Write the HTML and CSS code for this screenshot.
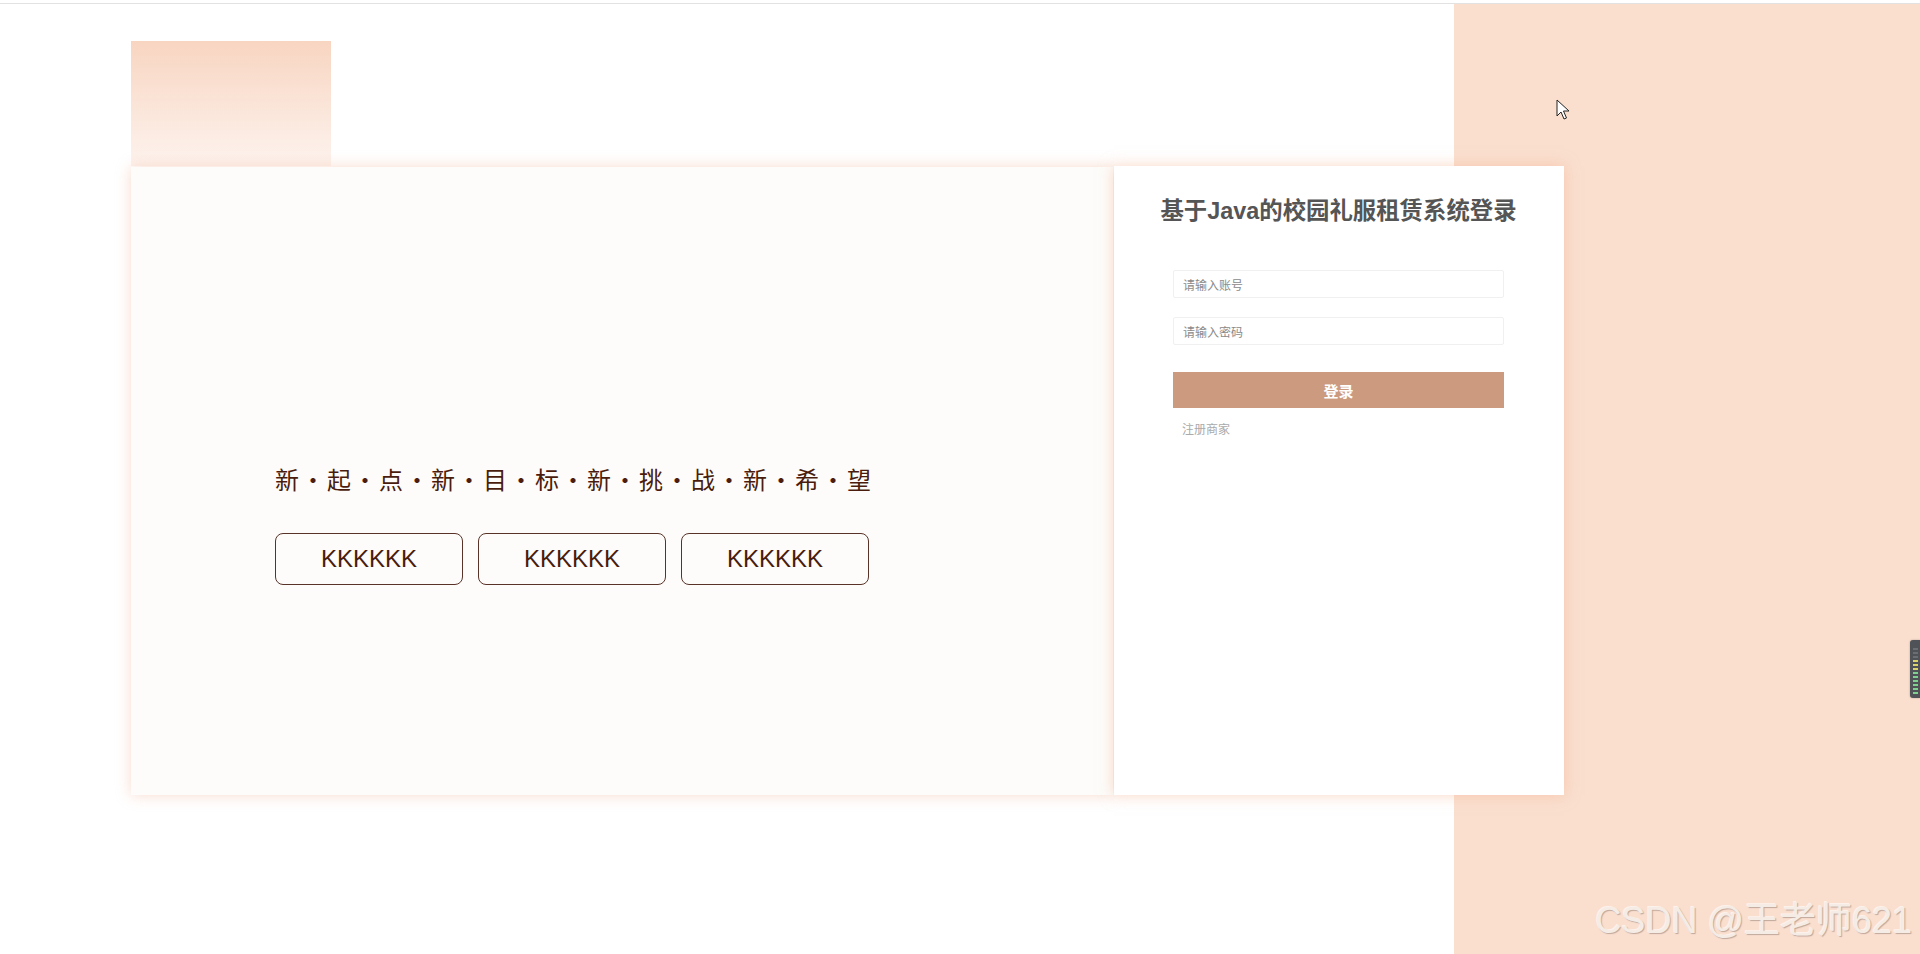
FILE: index.html
```html
<!DOCTYPE html>
<html lang="zh-CN">
<head>
<meta charset="utf-8">
<title>登录</title>
<link rel="stylesheet" href="styles.css">
</head>
<body>
<div class="page">
  <div class="deco"></div>
  <div class="stage">
    <section class="hero">
      <p class="slogan">新・起・点・新・目・标・新・挑・战・新・希・望</p>
      <div class="tags">
        <div class="tag">KKKKKK</div>
        <div class="tag">KKKKKK</div>
        <div class="tag">KKKKKK</div>
      </div>
    </section>
    <section class="login">
      <h1 class="title">基于Java的校园礼服租赁系统登录</h1>
      <form class="form">
        <input class="field" type="text" placeholder="请输入账号">
        <input class="field" type="password" placeholder="请输入密码">
        <button class="submit" type="button">登录</button>
        <a class="register">注册商家</a>
      </form>
    </section>
  </div>
  <svg class="cursor" width="14" height="22" viewBox="0 0 14 22"><path d="M1 1 L1 17 L5 13 L8 20 L10.5 19 L7.5 12 L13 12 Z" fill="#fff" stroke="#222" stroke-width="1" stroke-linejoin="round"/></svg>
  <div class="meter">
    <span class="bar g"></span><span class="bar g"></span><span class="bar g"></span><span class="bar g"></span><span class="bar g"></span><span class="bar g"></span><span class="bar y"></span><span class="bar y"></span><span class="bar y"></span><span class="bar d"></span><span class="bar d"></span><span class="bar d"></span>
  </div>
  <div class="watermark">CSDN @王老师621</div>
</div>
</body>
</html>
```
FILE: styles.css
```css
html, body {
  margin: 0;
  padding: 0;
}
body {
  font-family: "Liberation Sans", "Noto Sans CJK SC", sans-serif;
  width: 1920px;
  height: 954px;
  overflow: hidden;
  background: #fff;
}
.page {
  position: relative;
  box-sizing: border-box;
  height: 954px;
  margin-top: 3px;
  border-top: 1px solid #e2e2e2;
  padding: 37px 0 0 131px;
  background: linear-gradient(to right, #ffffff 1454px, #fadfcf 1454px);
}
.deco {
  width: 200px;
  height: 125px;
  background: linear-gradient(#f8d5c1, #fdf3ee);
}
.stage {
  display: flex;
  align-items: flex-start;
  gap: 1px;
}
.hero {
  box-sizing: border-box;
  width: 982px;
  height: 628px;
  margin-top: 1px;
  padding: 296px 0 0 144px;
  background: #fdfcfa;
  box-shadow: 0 0 14px rgba(240, 175, 145, 0.45);
}
.slogan {
  margin: 0;
  font-family: "Noto Sans CJK SC", sans-serif;
  font-size: 24px;
  line-height: 32px;
  letter-spacing: 2px;
  color: #4a1c0e;
}
.tags {
  display: flex;
  gap: 15px;
  margin-top: 38px;
}
.tag {
  box-sizing: border-box;
  width: 188px;
  height: 52px;
  border: 1px solid #5a3328;
  border-radius: 8px;
  display: flex;
  align-items: center;
  justify-content: center;
  font-size: 24px;
  color: #4a1c0e;
}
.login {
  box-sizing: border-box;
  width: 450px;
  height: 629px;
  padding: 29px 60px 0 59px;
  background: #fff;
  box-shadow: 0 0 14px rgba(245, 175, 140, 0.5);
}
.title {
  margin: 0 -40px;
  white-space: nowrap;
  text-align: center;
  font-size: 23.4px;
  line-height: 32px;
  font-weight: bold;
  color: #555;
}
.form {
  display: flex;
  flex-direction: column;
  margin-top: 43px;
}
.field {
  box-sizing: border-box;
  width: 331px;
  height: 28px;
  margin: 0 0 19px;
  padding: 0 9px;
  border: 1px solid #f0f0f0;
  border-radius: 2px;
  outline: none;
  font-family: "Noto Sans CJK SC", sans-serif;
  font-size: 12px;
  color: #333;
  background: #fff;
}
.field::placeholder {
  color: #8a8a8a;
}
.field + .field {
  margin-bottom: 27px;
}
.submit {
  width: 331px;
  height: 36px;
  border: none;
  margin: 0;
  padding: 0;
  background: #cc9a7f;
  color: #fff;
  font-family: "Noto Sans CJK SC", sans-serif;
  font-size: 15px;
  font-weight: bold;
}
.register {
  margin: 13px 0 0 9px;
  font-family: "Noto Sans CJK SC", sans-serif;
  font-size: 12px;
  line-height: 16px;
  color: #aaa;
}
.cursor {
  position: absolute;
  left: 1556px;
  top: 95px;
}
.meter {
  position: absolute;
  left: 1910px;
  top: 636px;
  width: 12px;
  height: 58px;
  box-sizing: border-box;
  padding: 6px 0 4px 3px;
  background: #4f5358;
  border-radius: 3px;
  display: flex;
  flex-direction: column-reverse;
  gap: 2px;
  box-shadow: 0 0 2px rgba(0,0,0,0.3);
}
.bar {
  display: block;
  width: 5px;
  height: 2px;
}
.bar.g { background: #7fcf8e; }
.bar.y { background: #d9d36a; }
.bar.d { background: #6b6f74; }
.watermark {
  position: absolute;
  right: 8px;
  bottom: 16px;
  font-size: 36px;
  line-height: 40px;
  color: #f6ece6;
  text-shadow: 1px 1px 1px rgba(120, 100, 90, 0.45), -1px -1px 0 rgba(255,255,255,0.6);
}
```
